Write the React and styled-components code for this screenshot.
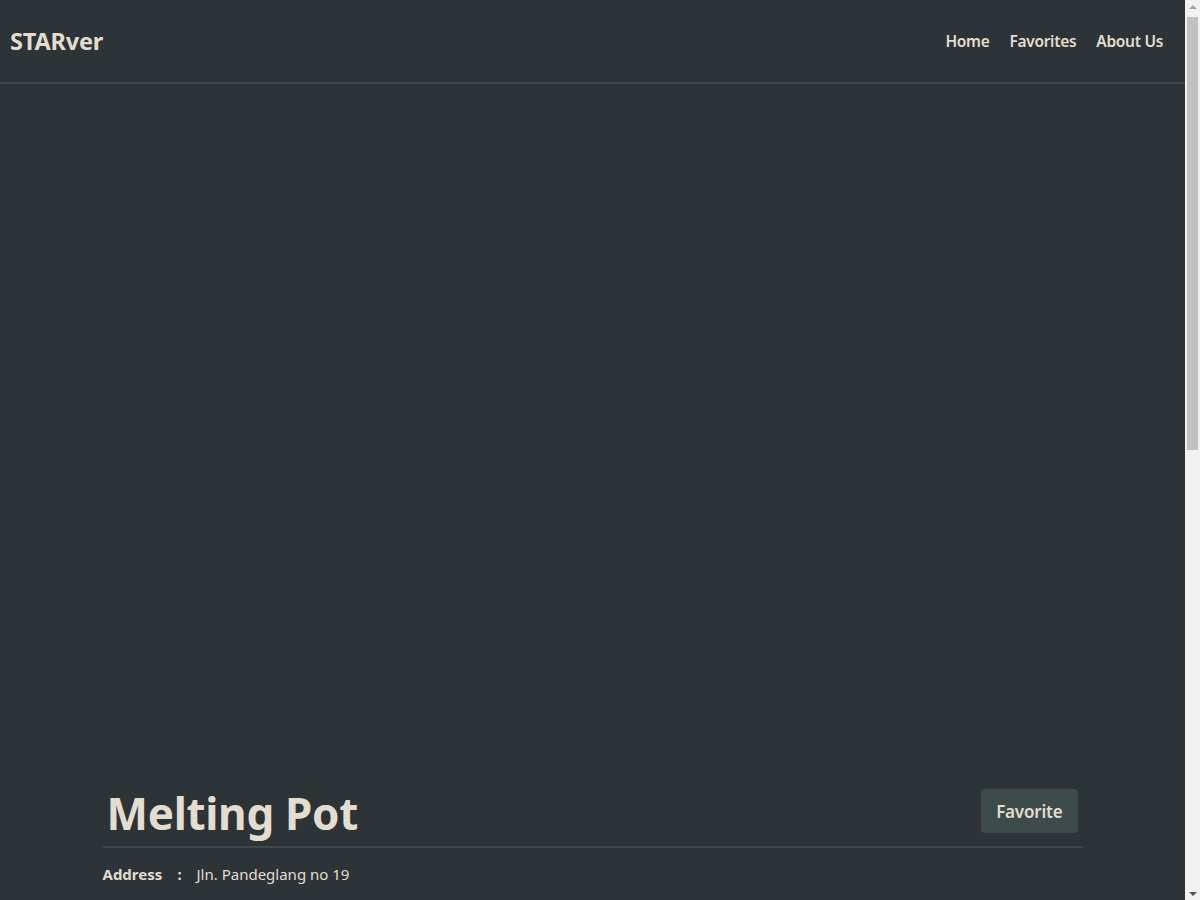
import styled, { createGlobalStyle } from "styled-components";

const GlobalStyle = createGlobalStyle`
  html, body {
    margin: 0;
    padding: 0;
    background-color: #2c3437;
  }

  body {
    font-family: "Noto Sans", "Open Sans", sans-serif;
    color: #e4dccf;
  }

  * {
    box-sizing: border-box;
  }
`;

const Frame = styled.div`
  display: flex;
  height: 100vh;
  overflow: hidden;
`;

const Page = styled.div`
  flex: 1;
  min-width: 0;
`;

const Scrollbar = styled.div`
  width: 15px;
  flex-shrink: 0;
  display: flex;
  flex-direction: column;
  align-items: center;
  background-color: #f1f1f1;
`;

const ArrowButton = styled.div`
  height: 17px;
  width: 100%;
  display: flex;
  align-items: center;
  justify-content: center;

  &::before {
    content: "";
    border-left: 4px solid transparent;
    border-right: 4px solid transparent;
    ${({ $down }) =>
      $down
        ? "border-top: 4px solid #505050; margin-top: 5px;"
        : "border-bottom: 4px solid #a3a3a3; margin-top: -4px;"}
  }
`;

const Thumb = styled.div`
  width: 11px;
  height: 433px;
  background-color: #c1c1c1;
`;

const Spacer = styled.div`
  flex: 1;
`;

const Header = styled.header`
  height: 84px;
  display: flex;
  align-items: center;
  justify-content: space-between;
  padding: 0 22px 0 10px;
  border-bottom: 2px solid #3e4b4a;
`;

const Logo = styled.h1`
  margin: 0;
  font-size: 23.5px;
  font-weight: 700;
  letter-spacing: -0.2px;
`;

const Nav = styled.nav`
  display: flex;
  gap: 20px;
`;

const NavLink = styled.a`
  font-size: 15.5px;
  font-weight: 600;
  color: #e4dccf;
  text-decoration: none;
  letter-spacing: -0.3px;
`;

const Hero = styled.div`
  height: 692px;
`;

const Detail = styled.main`
  max-width: 980px;
  margin: 0 auto;
`;

const TitleRow = styled.div`
  display: flex;
  align-items: center;
  justify-content: space-between;
  padding: 0 5px 0 4px;
  height: 72px;
  border-bottom: 2px solid #3e4b4a;
`;

const Title = styled.h2`
  margin: 0;
  padding-top: 4px;
  font-size: 44px;
  font-weight: 700;
  letter-spacing: -0.3px;
`;

const FavButton = styled.button`
  height: 44px;
  padding: 0 15px;
  border: none;
  border-radius: 4px;
  background-color: #3d4c4b;
  color: #e4dccf;
  font-family: inherit;
  font-size: 17px;
  font-weight: 600;
  letter-spacing: -0.2px;
`;

const InfoRow = styled.div`
  display: flex;
  align-items: center;
  margin-top: 16px;
  font-size: 15px;
`;

const InfoLabel = styled.span`
  font-weight: 700;
  width: 75px;
`;

const InfoSep = styled.span`
  font-weight: 700;
  width: 19px;
`;

export default function App() {
  return (
    <>
      <GlobalStyle />
      <Frame>
        <Page>
          <Header>
            <Logo>STARver</Logo>
            <Nav>
              <NavLink href="#">Home</NavLink>
              <NavLink href="#">Favorites</NavLink>
              <NavLink href="#">About Us</NavLink>
            </Nav>
          </Header>
          <Hero />
          <Detail>
            <TitleRow>
              <Title>Melting Pot</Title>
              <FavButton>Favorite</FavButton>
            </TitleRow>
            <InfoRow>
              <InfoLabel>Address</InfoLabel>
              <InfoSep>:</InfoSep>
              <span>Jln. Pandeglang no 19</span>
            </InfoRow>
          </Detail>
        </Page>
        <Scrollbar>
          <ArrowButton />
          <Thumb />
          <Spacer />
          <ArrowButton $down />
        </Scrollbar>
      </Frame>
    </>
  );
}
